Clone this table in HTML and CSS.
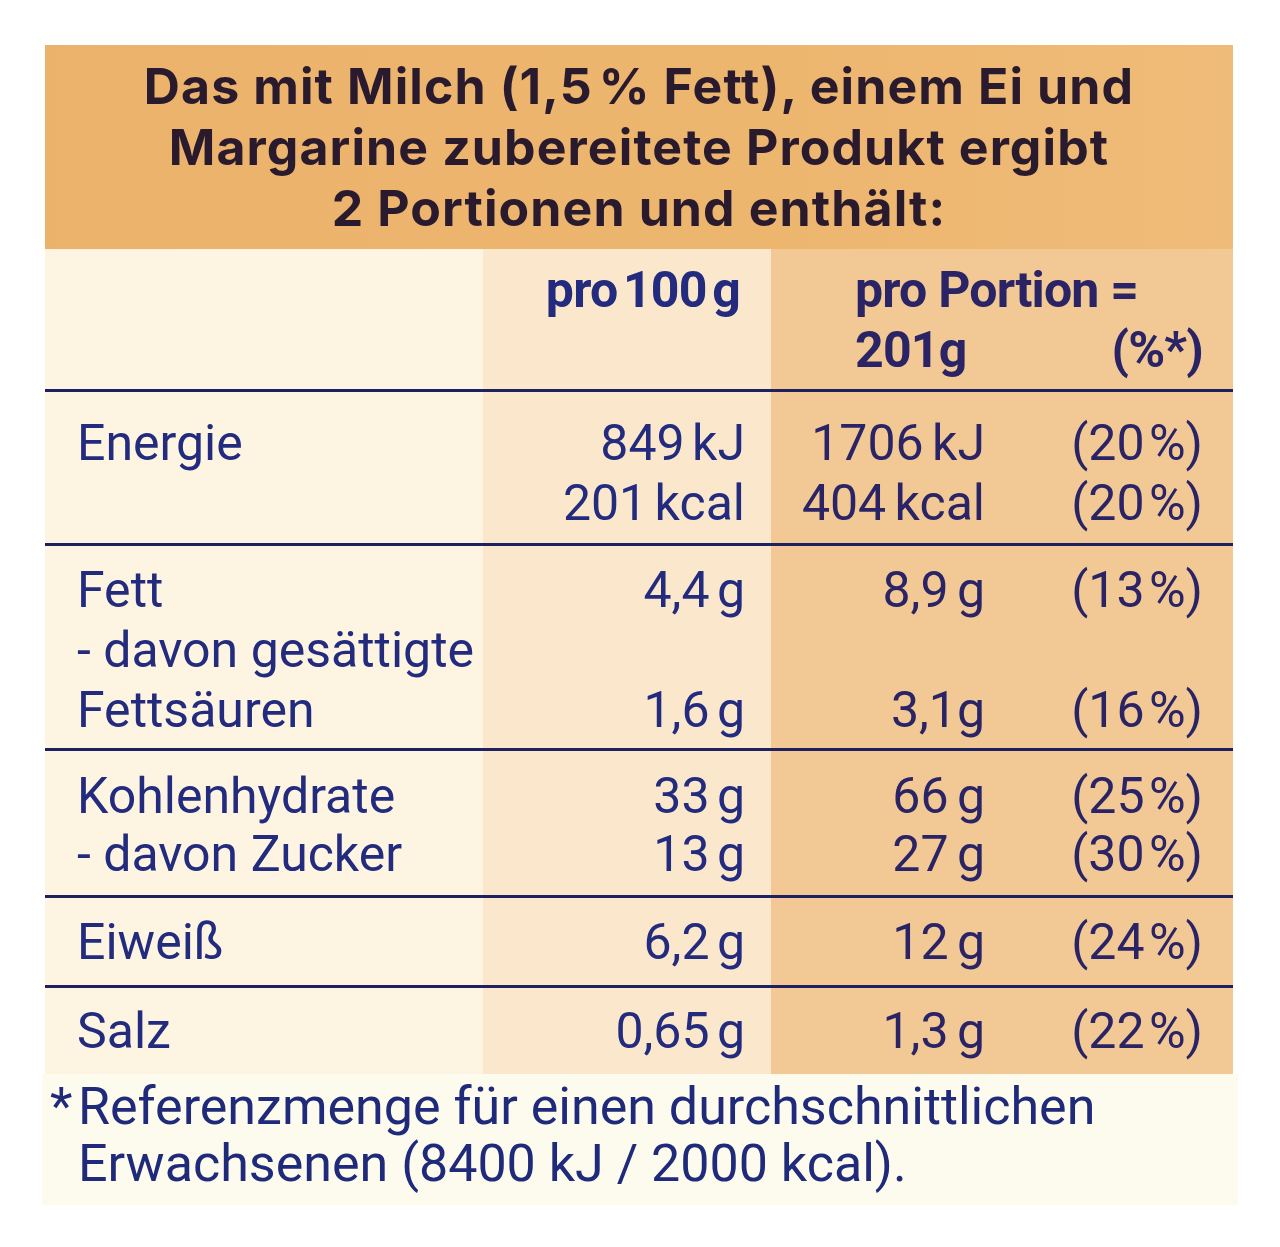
FILE: index.html
```html
<!DOCTYPE html>
<html lang="de">
<head>
<meta charset="utf-8">
<title>Nährwerte</title>
<link rel="stylesheet" href="styles.css">
</head>
<body>
<main class="panel">
  <header class="title">
    <h1>Das mit Milch (<span class="tight">1,5 %</span> Fett), einem Ei und<br>Margarine zubereitete Produkt ergibt<br>2 Portionen und enthält:</h1>
  </header>
  <section class="table">
    <div class="row row-head">
      <div class="cell c-label"></div>
      <div class="cell c-100"><span class="th th-100">pro 100 g</span></div>
      <div class="cell c-portion">
        <div class="th-portion">
          <span class="th">pro Portion =</span>
          <div class="th-line2"><span class="th">201g</span><span class="th">(%*)</span></div>
        </div>
      </div>
    </div>

    <div class="row row-energy">
      <div class="cell c-label">Energie</div>
      <div class="cell c-100">849 kJ<br>201 kcal</div>
      <div class="cell c-val">1706 kJ<br>404 kcal</div>
      <div class="cell c-pct">(20 %)<br>(20 %)</div>
    </div>

    <div class="row row-fat">
      <div class="cell c-label">Fett<br>- davon gesättigte<br>Fettsäuren</div>
      <div class="cell c-100">4,4 g<br>&nbsp;<br>1,6 g</div>
      <div class="cell c-val">8,9 g<br>&nbsp;<br>3,1g</div>
      <div class="cell c-pct">(13 %)<br>&nbsp;<br>(16 %)</div>
    </div>

    <div class="row row-carb">
      <div class="cell c-label">Kohlenhydrate<br>- davon Zucker</div>
      <div class="cell c-100">33 g<br>13 g</div>
      <div class="cell c-val">66 g<br>27 g</div>
      <div class="cell c-pct">(25 %)<br>(30 %)</div>
    </div>

    <div class="row row-protein">
      <div class="cell c-label">Eiweiß</div>
      <div class="cell c-100">6,2 g</div>
      <div class="cell c-val">12 g</div>
      <div class="cell c-pct">(24 %)</div>
    </div>

    <div class="row row-salt">
      <div class="cell c-label">Salz</div>
      <div class="cell c-100">0,65 g</div>
      <div class="cell c-val">1,3 g</div>
      <div class="cell c-pct">(22 %)</div>
    </div>
  </section>
  <footer class="note">
    <span class="star">*</span>
    <p>Referenzmenge für einen durchschnittlichen<br>Erwachsenen (8400 kJ / 2000 kcal).</p>
  </footer>
</main>
</body>
</html>
```

FILE: styles.css
```css
html, body {
  margin: 0;
  padding: 0;
  background: #ffffff;
}

body {
  font-family: Roboto, "Liberation Sans", sans-serif;
}

.panel {
  width: 1188px;
  margin: 45px 0 0 45px;
}

.title {
  background: linear-gradient(90deg, #ebb26c 0%, #edb66f 60%, #efbb78 100%);
  padding: 11px 0 10px;
  text-align: center;
}

.title h1 {
  margin: 0;
  font-family: Inter, "Open Sans", sans-serif;
  font-weight: 700;
  font-size: 50px;
  line-height: 61px;
  color: #2a1a2d;
  letter-spacing: 1.1px;
  word-spacing: 0;
}

.title .tight {
  word-spacing: -7px;
}

.table {
  display: flex;
  flex-direction: column;
}

.row {
  display: grid;
  grid-template-columns: 438px 288px 214px 248px;
  border-bottom: 3px solid #1e2160;
  font-size: 50px;
  line-height: 60px;
  color: #232b7e;
}

.row-salt {
  border-bottom: none;
}

.row-head {
  grid-template-columns: 438px 288px 462px;
}

.cell {
  padding-top: var(--pt);
  padding-bottom: var(--pb);
}

.c-label {
  background: #fdf4e2;
  padding-left: 32px;
}

.c-100 {
  background: #fbe8cc;
  text-align: right;
  padding-right: 26px;
  word-spacing: -5px;
}

.c-val {
  background: #f2c994;
  text-align: right;
  color: #2a2466;
  word-spacing: -4px;
}

.c-pct {
  background: #f2c994;
  text-align: right;
  padding-right: 30px;
  color: #2a2466;
  word-spacing: -8px;
}

.c-portion {
  background: #f2c994;
  padding-left: 84px;
  padding-right: 30px;
  color: #2a2466;
}

.th {
  font-weight: 700;
  letter-spacing: -0.8px;
}

.th-100 {
  color: #232b7e;
  word-spacing: -6px;
  margin-right: 5px;
}

.th-line2 {
  display: flex;
  justify-content: space-between;
}

.row-head { --pt: 11px; --pb: 9px; }
.row-energy { --pt: 21px; --pb: 10px; }
.row-fat { --pt: 14px; --pb: 8px; }
.row-carb { --pt: 16px; --pb: 12px; line-height: 58px; }
.row-protein { --pt: 14px; --pb: 13px; }
.row-salt { --pt: 13px; --pb: 13px; }

.note {
  display: flex;
  background: #fdfbed;
  margin: 0 -5px 0 -3px;
  padding: 4px 0 13px 8px;
  font-size: 52px;
  line-height: 57px;
  color: #1f2a7a;
}

.star {
  width: 28px;
  flex: none;
}

.note p {
  margin: 0;
}
```
